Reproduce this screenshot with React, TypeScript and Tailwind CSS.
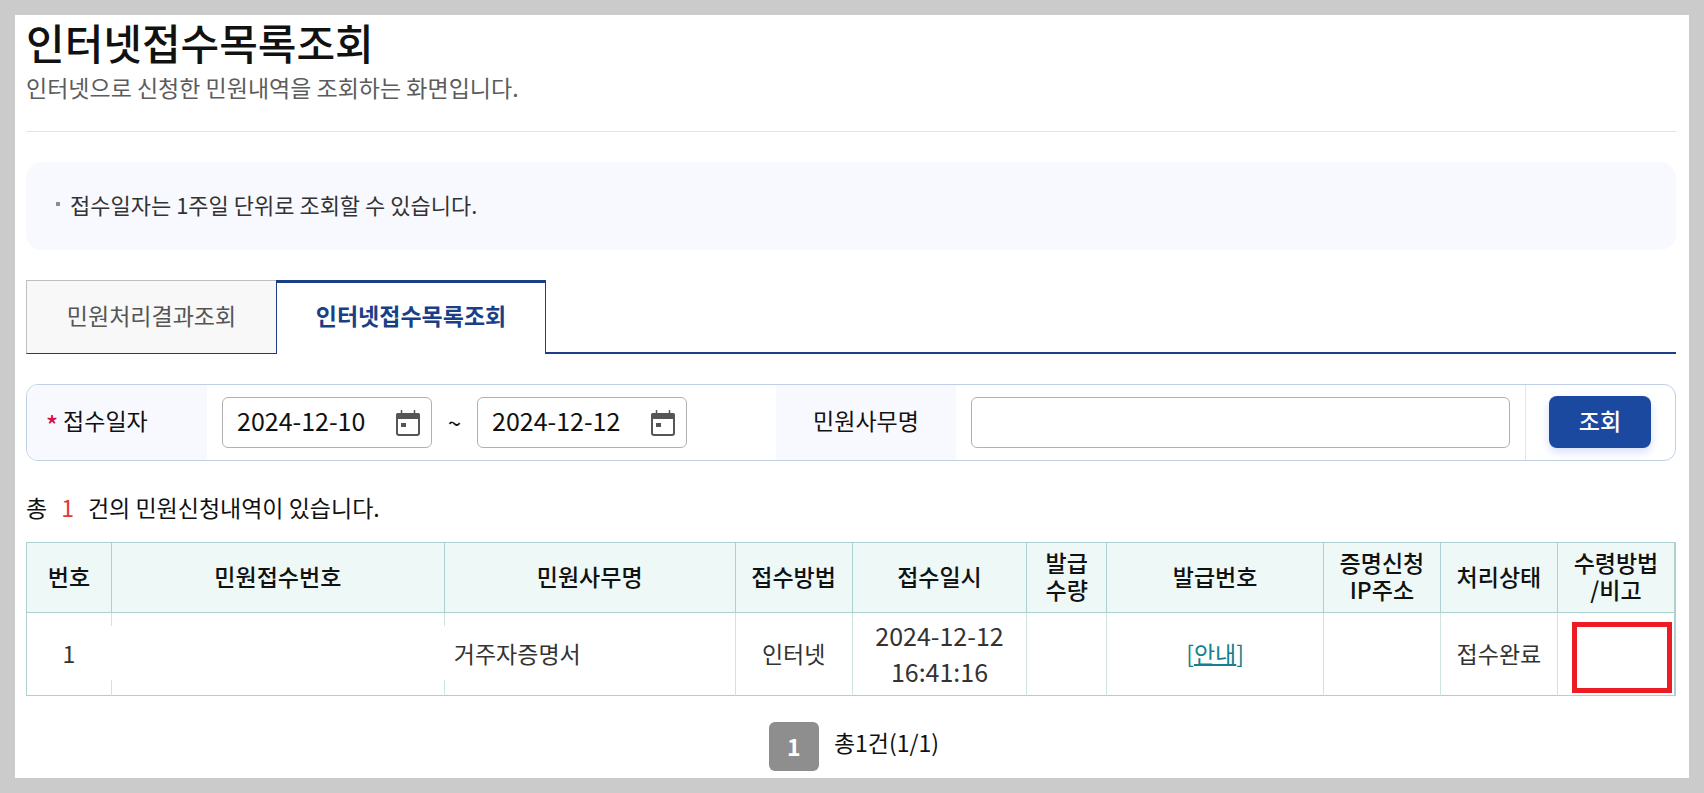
import React, { useState } from "react";

type Column = { label: string[]; width: string };

const columns: Column[] = [
  { label: ["번호"], width: "w-[5.15%]" },
  { label: ["민원접수번호"], width: "w-[20.2%]" },
  { label: ["민원사무명"], width: "w-[17.65%]" },
  { label: ["접수방법"], width: "w-[7.1%]" },
  { label: ["접수일시"], width: "w-[10.6%]" },
  { label: ["발급", "수량"], width: "w-[4.85%]" },
  { label: ["발급번호"], width: "w-[13.15%]" },
  { label: ["증명신청", "IP주소"], width: "w-[7.1%]" },
  { label: ["처리상태"], width: "w-[7.1%]" },
  { label: ["수령방법", "/비고"], width: "w-[7.1%]" },
];

function CalendarIcon() {
  return (
    <svg width="24" height="26" viewBox="0 0 24 26" fill="none" aria-hidden="true">
      <rect x="1" y="4" width="22" height="21" rx="2" stroke="#555" strokeWidth="2" />
      <path d="M0 9V5a2 2 0 0 1 2-2h20a2 2 0 0 1 2 2v4z" fill="#555" />
      <path d="M5.5 0v4M18.5 0v4" stroke="#555" strokeWidth="1.5" />
      <rect x="5" y="13" width="5" height="4" fill="#555" />
    </svg>
  );
}

function DateField({ label, initial }: { label: string; initial: string }) {
  const [value, setValue] = useState(initial);
  return (
    <div className="flex h-[51px] w-[210px] items-center rounded-md border border-[#b1b1b1] bg-white pr-[11px] pl-[14px]">
      <input
        type="text"
        aria-label={label}
        value={value}
        onChange={(e) => setValue(e.target.value)}
        className="min-w-0 flex-1 bg-transparent pb-1 text-[25px] text-[#111] outline-none"
      />
      <button type="button" aria-label={`${label} 달력`}>
        <CalendarIcon />
      </button>
    </div>
  );
}

const cell = "border-r border-b border-r-[#cfe3e3] border-b-[#afd0d0] p-0 pb-[2px]";

export default function App() {
  const [name, setName] = useState("");
  return (
    <div className="min-h-screen bg-[#cbcbcb] p-[15px] font-['Noto_Sans_CJK_KR','Noto_Sans',sans-serif] text-[23px] text-[#111]">
      <main className="min-h-[calc(100vh-30px)] bg-white pr-[13px] pl-[11px]">
        <header className="border-b border-[#e4e4e4] pb-[26px]">
          <h1 className="text-[42px] leading-[54px] font-medium">인터넷접수목록조회</h1>
          <p className="leading-9 text-[#5c5c5c]">
            인터넷으로 신청한 민원내역을 조회하는 화면입니다.
          </p>
        </header>

        <ul className="mt-[30px] rounded-2xl bg-[#f8f9fe] px-[30px] pt-6 pb-7">
          <li className="flex items-center gap-[10px] text-[22px] leading-9 text-[#333]">
            <span className="size-1 bg-[#8a8d94]" />
            접수일자는 1주일 단위로 조회할 수 있습니다.
          </li>
        </ul>

        <nav className="mt-[30px] flex h-[74px]">
          <a
            href="#result"
            className="flex w-[250px] items-center justify-center border border-r-0 border-[#bfbfbf] border-b-[#1a3c7c] bg-[#f8f8f8] pb-1 text-[#555]"
          >
            민원처리결과조회
          </a>
          <a
            href="#list"
            aria-current="page"
            className="flex w-[270px] items-center justify-center border-x border-t-3 border-[#1a3f87] pb-[6px] font-bold text-[#1a3f87]"
          >
            인터넷접수목록조회
          </a>
          <div className="flex-1 border-b-2 border-[#1a3f87]" />
        </nav>

        <form
          onSubmit={(e) => e.preventDefault()}
          className="mt-[30px] flex h-[77px] items-stretch overflow-hidden rounded-xl border border-[#bfcfe4]"
        >
          <div className="flex w-[180px] shrink-0 items-center gap-[5px] bg-[#f8f9fe] pb-1 pl-[19px]">
            <span className="pt-2 text-[25px] font-medium text-[#d5124a]">*</span>
            접수일자
          </div>
          <div className="flex w-[569px] shrink-0 items-center pl-[15px]">
            <DateField label="접수일자 시작" initial="2024-12-10" />
            <span className="w-[45px] text-center font-medium">~</span>
            <DateField label="접수일자 종료" initial="2024-12-12" />
          </div>
          <label
            htmlFor="service-name"
            className="flex w-[180px] shrink-0 items-center justify-center bg-[#f8f9fe] pb-1"
          >
            민원사무명
          </label>
          <div className="flex flex-1 items-center px-[15px]">
            <input
              id="service-name"
              type="text"
              value={name}
              onChange={(e) => setName(e.target.value)}
              className="h-[51px] w-full rounded-md border border-[#b1b1b1] bg-white px-4 outline-none"
            />
          </div>
          <div className="flex w-[150px] shrink-0 items-center border-l border-[#dfe6f0] pb-px pl-[23px]">
            <button
              type="submit"
              className="h-[52px] w-[102px] rounded-lg bg-[#1c49a0] pb-1 font-medium text-white shadow-[0_4px_10px_#d5dffb]"
            >
              조회
            </button>
          </div>
        </form>

        <p className="mt-7 leading-9">
          총<span className="px-[14px] text-[#e03a3a]">1</span>건의 민원신청내역이 있습니다.
        </p>

        <table className="mt-[17px] w-full table-fixed border-separate border-spacing-0 border-t border-r border-l border-[#afd0d0] text-center">
          <thead>
            <tr className="h-[70px]">
              {columns.map((c) => (
                <th
                  key={c.label.join("")}
                  scope="col"
                  className={`${c.width} border-r border-b border-[#afd0d0] bg-[#edf8f7] p-0 pb-[3px] leading-[27px] font-medium whitespace-pre-line`}
                >
                  {c.label.join("\n")}
                </th>
              ))}
            </tr>
          </thead>
          <tbody>
            <tr className="h-[83px] text-[#333]">
              <td className={cell}>1</td>
              <td className={`${cell} relative`}>
                <div className="absolute -inset-x-px top-[13px] bottom-[15px] bg-white" />
              </td>
              <td className={`${cell} pl-[9px] text-left`}>거주자증명서</td>
              <td className={cell}>인터넷</td>
              <td className={`${cell} text-[25px] leading-9`}>
                2024-12-12
                <br />
                16:41:16
              </td>
              <td className={cell} />
              <td className={cell}>
                <a href="#guide" className="text-[#13808c]">
                  [<span className="underline decoration-2">안내</span>]
                </a>
              </td>
              <td className={cell} />
              <td className={cell}>접수완료</td>
              <td className="border-r border-b border-[#afd0d0] pt-[7px] pr-[2px] pb-0 pl-[14px]">
                <div className="h-[71px] border-5 border-[#ed1c24]" />
              </td>
            </tr>
          </tbody>
        </table>

        <div className="mt-[26px] flex items-start justify-center gap-[15px] pl-[6px]">
          <button
            type="button"
            aria-current="page"
            className="h-[49px] w-[50px] rounded-md bg-[#8e8e8e] font-bold text-white"
          >
            1
          </button>
          <span className="leading-10">총1건(1/1)</span>
        </div>
      </main>
    </div>
  );
}
